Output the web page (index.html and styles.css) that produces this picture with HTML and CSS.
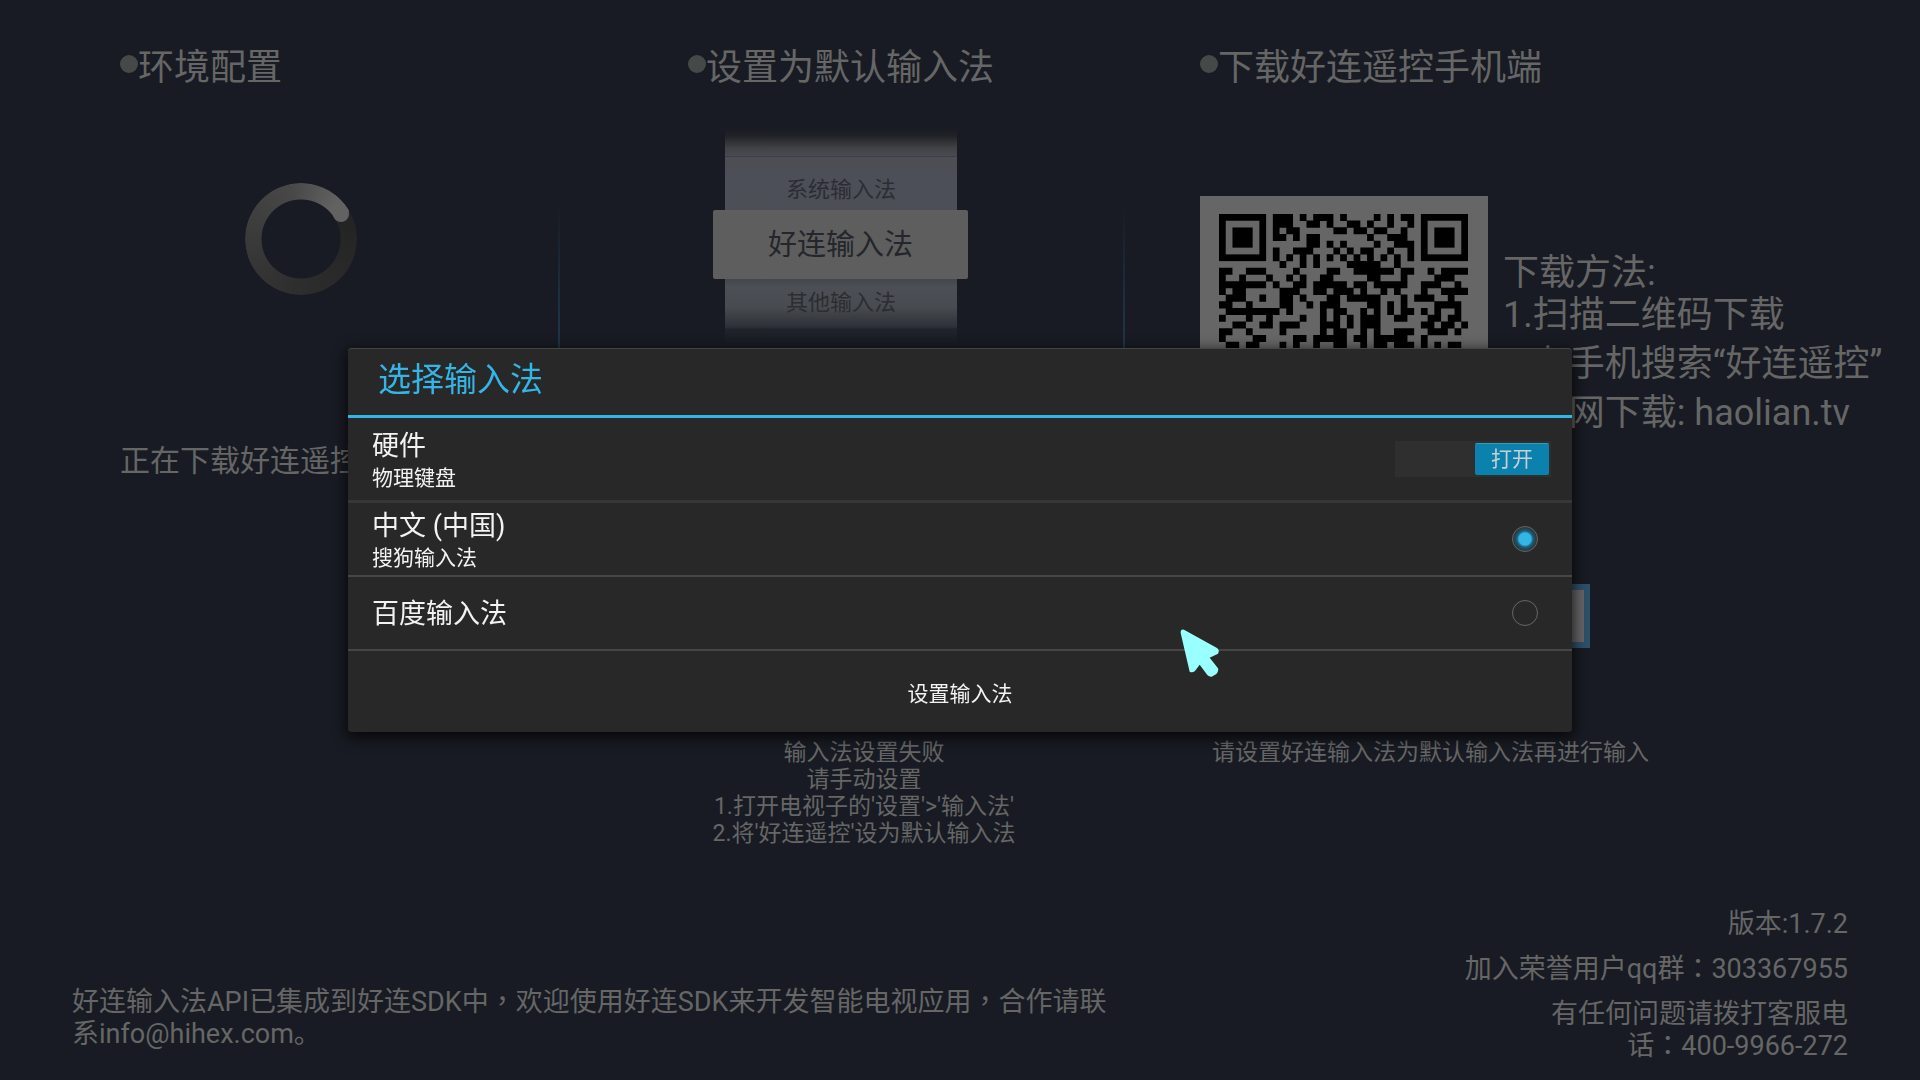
FILE: index.html
```
<!DOCTYPE html>
<html lang="zh-CN">
	<head>
		<meta charset="utf-8">
		<title>好连输入法</title>

		<meta content="width=device-width, initial-scale=1" name="viewport">

		<link rel="stylesheet" href="styles.css">
	</head>
	<body>
		<div id="steps">
			<div class="step">
				<h2><i class="dot"></i>环境配置</h2>
				<div id="download">
					<div class="spinner"></div>
					<p>正在下载好连遥控手机端</p>
				</div>
			</div>

			<div class="divider"></div>

			<div class="step">
				<h2><i class="dot"></i>设置为默认输入法</h2>
				<ul id="picker">
					<li class="above">系统输入法</li>
					<li class="selected">好连输入法</li>
					<li class="below">其他输入法</li>
				</ul>
				<div id="failed">
					<p>输入法设置失败</p>
					<p>请手动设置</p>
					<p>1.打开电视子的'设置'&gt;'输入法'</p>
					<p>2.将'好连遥控'设为默认输入法</p>
				</div>
			</div>

			<div class="divider"></div>

			<div class="step">
				<h2><i class="dot"></i>下载好连遥控手机端</h2>
				<div id="phone">
					<div class="qr">
						<svg viewBox="0 0 37 37" width="249" height="249" fill="none" stroke="#000">
							<rect x="0.5" y="0.5" width="6" height="6" />
							<rect x="2" y="2" width="3" height="3" fill="#000" stroke="none" />
							<rect x="30.5" y="0.5" width="6" height="6" />
							<rect x="32" y="2" width="3" height="3" fill="#000" stroke="none" />
							<rect x="0.5" y="30.5" width="6" height="6" />
							<rect x="2" y="32" width="3" height="3" fill="#000" stroke="none" />
							<path stroke-width="1.05" d="M8 .5h3m1 0h1m1 0h3m1 0h1m4 0h1m1 0h1m1 0h2
								M8 1.5h3m2 0h2m1 0h1m2 0h2m1 0h1m2 0h1m2 0h1
								M8 2.5h1m1 0h2m5 0h2m1 0h2m1 0h2m2 0h1
								M8 3.5h2m1 0h1m1 0h2m7 0h1m2 0h3
								M13 4.5h2m1 0h1m1 0h1m4 0h1m2 0h3
								M8 5.5h1m2 0h3m3 0h1m1 0h1m1 0h2m2 0h1m2 0h1
								M8 6.5h1m1 0h1m1 0h1m1 0h1m1 0h1m1 0h1m1 0h1m1 0h1m1 0h1m1 0h1m1 0h1
								M9 7.5h1m2 0h1m1 0h1m4 0h5m2 0h1
								M0 8.5h2m2 0h3m4 0h1m4 0h2m2 0h6m1 0h2m2 0h1m1 0h4
								M0 9.5h1m2 0h1m3 0h1m2 0h1m1 0h1m2 0h2m5 0h2m3 0h1m4 0h3
								M0 10.5h7m1 0h1m2 0h2m1 0h5m1 0h2m1 0h5m2 0h3m2 0h1
								M0 11.5h1m1 0h2m5 0h3m2 0h2m1 0h3m1 0h1m2 0h1m1 0h1m3 0h1m2 0h4
								M1 12.5h3m2 0h1m2 0h2m1 0h1m3 0h2m1 0h5m3 0h1m1 0h3m2 0h1
								M0 13.5h2m2 0h1m4 0h2m2 0h1m1 0h3m4 0h2m1 0h1m1 0h1m4 0h4
								M1 14.5h8m1 0h1m4 0h1m1 0h2m2 0h1m1 0h1m1 0h1m1 0h2m1 0h1m1 0h1m2 0h1
								M0 15.5h1m3 0h1m2 0h1m4 0h1m2 0h1m1 0h1m1 0h1m1 0h3m2 0h2m3 0h2m1 0h2
								M2 16.5h2m2 0h2m1 0h3m3 0h3m1 0h1m1 0h3m6 0h2m1 0h2m1 0h1
								M0 17.5h2m2 0h1m4 0h1m5 0h1m1 0h2m2 0h1m1 0h1m2 0h3m2 0h3m1 0h1
								M0 18.5h1m4 0h2m4 0h2m1 0h5m1 0h2m1 0h5m2 0h1
								M1 19.5h2m1 0h2m3 0h1m1 0h1m2 0h1m2 0h2m2 0h1m1 0h2m1 0h3m1 0h1m1 0h1m1 0h2" />
						</svg>
					</div>
					<div class="howto">
						<p>下载方法:</p>
						<p>1.扫描二维码下载</p>
						<p class="spaced">2.在手机搜索“好连遥控”</p>
						<p class="spaced">3.官网下载: haolian.tv</p>
					</div>
				</div>
				<input id="try" type="text" aria-label="输入测试">
				<p id="hint">请设置好连输入法为默认输入法再进行输入</p>
			</div>
		</div>

		<!-- zh-TW centres the full-width comma and colon in their cell -->
		<div id="footer">
			<p class="about">好连输入法API已集成到好连SDK中<span lang="zh-TW">，</span>欢迎使用好连SDK来开发智能电视应用<span lang="zh-TW">，</span>合作请联系info@hihex.com。</p>
			<div class="contact">
				<p>版本:1.7.2</p>
				<p>加入荣誉用户qq群<span lang="zh-TW">：</span>303367955</p>
				<p>有任何问题请拨打客服电<br>话<span lang="zh-TW">：</span>400-9966-272</p>
			</div>
		</div>

		<div id="overlay">
			<form id="dialog">
				<h1>选择输入法</h1>
				<div class="row hardware">
					<div class="names">
						<div class="name">硬件</div>
						<div class="sub">物理键盘</div>
					</div>
					<label class="switch">
						<input type="checkbox" aria-label="物理键盘" checked>
						<span>打开</span>
					</label>
				</div>
				<label class="row">
					<span class="names">
						<span class="name">中文 (中国)</span>
						<span class="sub">搜狗输入法</span>
					</span>
					<input type="radio" name="ime" checked>
				</label>
				<label class="row">
					<span class="names">
						<span class="name">百度输入法</span>
					</span>
					<input type="radio" name="ime">
				</label>
				<button type="button">设置输入法</button>
			</form>
		</div>

		<svg id="pointer" viewBox="180 686 120 147" width="40" height="49">
			<path fill="#99ffff" d="M182 698Q181 686 192 688L291 743Q300 750 294 760L269 772L294 804Q297 812 289 821L275 829Q268 830 262 824L239 793L225 812Q217 819 209 814Z" />
		</svg>
	</body>
</html>
```
FILE: styles.css
```
* {
	box-sizing: border-box;
}

body {
	margin: 0;
	min-height: 100vh;

	display: flex;
	flex-direction: column;

	background-color: #181b23;
	color: #666;

	font-family: Roboto, "Noto Sans CJK SC", sans-serif;
	font-size: 27px;
	line-height: 32px;
}

h1, h2, p, ul {
	margin: 0;
	padding: 0;
	font-weight: 400;
}

/* three setup steps */

#steps {
	display: grid;
	grid-template-columns: 438fr 130fr 435fr 77fr 720fr;
	padding: 46px 0 0 120px;
}

.step {
	min-width: 0;
	white-space: nowrap;
}

.step h2 {
	display: flex;
	align-items: center;
	font-size: 36px;
	line-height: 44px;
}

.dot {
	width: 18px;
	height: 18px;
	margin-bottom: 8px;
	border-radius: 50%;
	background-color: #454a49;
}

.divider {
	width: 2px;
	height: 460px;
	margin-top: 158px;
	background: linear-gradient(transparent, #1e3346 25%, #1e3346 75%, transparent);
}

#download {
	width: 362px;
	font-size: 30px;
	line-height: 40px;
}

.spinner {
	position: relative;
	width: 112px;
	height: 112px;
	margin: 93px auto 146px;
}

.spinner::before {
	content: "";
	display: block;
	height: 112px;
	border-radius: 50%;
	background: conic-gradient(from 60deg, #232323, #2c2c2c 110deg, #3a3a3a 210deg, #484848 290deg, #626262 345deg, #626262);
	-webkit-mask: radial-gradient(closest-side, transparent 39px, #000 40px);
	mask: radial-gradient(closest-side, transparent 39px, #000 40px);
}

.spinner::after {
	content: "";
	position: absolute;
	left: 88px;
	top: 23px;
	width: 16px;
	height: 16px;
	border-radius: 50%;
	background-color: #626262;
}

#picker {
	width: 255px;
	margin: 38px 0 0 25px;
	list-style: none;
	text-align: center;
	font-size: 22px;
	color: #2b2d32;
}

#picker li {
	margin: 0 11px 0 12px;
}

#picker .above {
	height: 82px;
	padding-top: 46px;
	background: linear-gradient(#181b23, #202226 8px, #404246 20px, #494b51 28px, #3a3f4a 28px, #3a3f4a 29px, #4c4e52 29px, #4c4f58 50px, #4c4f55);
}

#picker .selected {
	margin: 0;
	padding: 15px 0 14px;
	border-radius: 2px;
	background-color: #5e5e5e;
	font-size: 29px;
	line-height: 40px;
	color: #24262b;
}

#picker .below {
	height: 65px;
	padding-top: 8px;
	background: linear-gradient(#43464b, #4c4f55 8px, #484b50 28px, #2d3036 48px, #20232a 50px, #181b23);
}

#failed {
	width: 352px;
	margin-top: 395px;
	text-align: center;
	font-size: 23px;
	line-height: 27px;
}

#phone {
	display: flex;
	align-items: flex-start;
	margin-top: 106px;
}

.qr {
	width: 288px;
	height: 288px;
	padding: 18px 19px;
	background-color: #666;
	flex: none;
}

.qr svg {
	display: block;
}

.howto {
	padding: 56px 0 0 15px;
	font-size: 36px;
	line-height: 42px;
}

.howto .spaced {
	margin-top: 7px;
}

#try {
	display: block;
	width: 390px;
	height: 64px;
	margin-top: 100px;
	border: 6px solid #2f506a;
	background-color: #666;
}

#hint {
	margin: 91px 0 0 12px;
	font-size: 23px;
	line-height: 27px;
}

/* bottom texts */

#footer {
	display: flex;
	justify-content: space-between;
	align-items: flex-end;
	margin-top: auto;
	padding: 0 72px 18px;
}

.about {
	max-width: 1046px;
	padding-bottom: 12px;
}

.contact {
	text-align: right;
	white-space: nowrap;
}

.contact p + p {
	margin-top: 13px;
}

/* input method dialog */

#overlay {
	position: fixed;
	top: 0; left: 0; bottom: 0; right: 0;

	display: flex;
	align-items: center;
	justify-content: center;
}

#dialog {
	width: 63.75%;
	border-radius: 4px;
	background-color: #282828;
	box-shadow: 0 4px 14px 2px rgba(0, 0, 0, 0.7);
	color: #f3f3f3;
}

#dialog h1 {
	padding: 11px 30px 15px;
	border-top: 1px solid #444;
	border-bottom: 3px solid #33b5e5;
	border-radius: 4px 4px 0 0;
	font-size: 33px;
	line-height: 40px;
	color: #33b5e5;
}

.row {
	display: flex;
	align-items: center;
	justify-content: space-between;
	height: 74px;
	padding: 0 34px 0 24px;
	border-bottom: 2px solid #464646;
}

.row.hardware {
	height: 85px;
	padding-right: 21px;
	border-bottom: 3px solid #373737;
}

.names {
	padding-top: 2px;
}

.name, .sub {
	display: block;
}

.name {
	font-size: 27px;
	line-height: 36px;
}

.sub {
	font-size: 21px;
	line-height: 28px;
}

.switch {
	position: relative;
	display: flex;
	justify-content: flex-end;
	width: 156px;
	padding: 2px;
	background-color: #2f2f2f;
}

.switch input {
	position: absolute;
	opacity: 0;
}

.switch span {
	width: 74px;
	border-top: 1px solid #3a9abb;
	border-radius: 2px;
	background-color: #0b82ae;
	text-align: center;
	font-size: 21px;
	line-height: 31px;
	color: #c8d0d3;
}

input[type="radio"] {
	-webkit-appearance: none;
	appearance: none;
	width: 26px;
	height: 26px;
	margin: 0;
	border: 1px solid #666;
	border-radius: 50%;
}

input[type="radio"]:checked {
	background: radial-gradient(circle, #33b5e5 6px, #1f5d74 8px, #26343a 12px);
}

#dialog button {
	display: block;
	width: 100%;
	height: 81px;
	border: none;
	background: none;
	font-family: inherit;
	font-size: 21px;
	color: #f3f3f3;
}

#pointer {
	position: fixed;
	left: 1180px;
	top: 629px;
}
```
